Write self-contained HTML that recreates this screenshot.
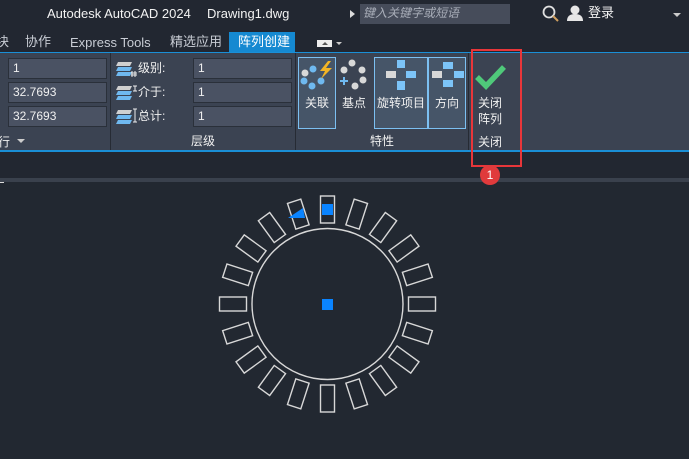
<!DOCTYPE html>
<html><head><meta charset="utf-8"><style>
*{margin:0;padding:0;box-sizing:border-box}
body{width:689px;height:459px;overflow:hidden;background:#222831;font-family:"Liberation Sans","Noto Sans CJK SC",sans-serif;color:#e8eaee;position:relative}
.a{position:absolute}
.t{font-size:13px;white-space:nowrap;line-height:16px}
.inp{position:absolute;background:#4a5263;border:1px solid #2a303a;height:21px;font-size:12px;color:#f0f0f0;padding:2px 0 0 4px}
.btn{position:absolute;top:57px;height:72px;border:1px solid #7cc0f2;background:#465568}
.lbl{position:absolute;font-size:12px;color:#f0f0f0;white-space:nowrap;line-height:16px}
</style></head><body>
<div class="a" style="left:0;top:0;width:689px;height:30px;background:#222731"></div>
<div class="a t" style="left:47px;top:6px;color:#f2f2f2">Autodesk AutoCAD 2024</div>
<div class="a t" style="left:207px;top:6px;color:#f2f2f2">Drawing1.dwg</div>
<div class="a" style="left:350px;top:10px;width:0;height:0;border-left:5px solid #ddd;border-top:4px solid transparent;border-bottom:4px solid transparent"></div>
<div class="a" style="left:360px;top:4px;width:150px;height:20px;background:#464c5a"></div>
<div class="a" style="left:363px;top:5px;font-size:12px;color:#a8adb8;font-style:italic;line-height:16px">键入关键字或短语</div>
<svg class="a" style="left:541px;top:4px" width="20" height="20"><circle cx="8" cy="8" r="5.5" fill="none" stroke="#e0e0e0" stroke-width="1.8"/><line x1="12" y1="12" x2="17" y2="17" stroke="#d0a060" stroke-width="2"/></svg>
<svg class="a" style="left:566px;top:4px" width="18" height="18"><circle cx="9" cy="6" r="4.5" fill="#e6e6e6"/><path d="M1 17 Q1 10 9 10 Q17 10 17 17Z" fill="#e6e6e6"/></svg>
<div class="a t" style="left:588px;top:5px;color:#f2f2f2">登录</div>
<div class="a" style="left:673px;top:13px;border-top:4px solid #ccc;border-left:4px solid transparent;border-right:4px solid transparent"></div>
<div class="a" style="left:0;top:30px;width:689px;height:22px;background:#222731"></div>
<div class="a t" style="left:-4px;top:34px;color:#c8ccd4">块</div>
<div class="a t" style="left:25px;top:34px;color:#c8ccd4">协作</div>
<div class="a t" style="left:70px;top:35px;color:#c8ccd4">Express Tools</div>
<div class="a t" style="left:170px;top:34px;color:#c8ccd4">精选应用</div>
<div class="a" style="left:229px;top:32px;width:66px;height:21px;background:#1589d1"></div>
<div class="a t" style="left:238px;top:34px;color:#fff">阵列创建</div>
<div class="a" style="left:317px;top:40px;width:15px;height:7px;background:#eee"></div>
<div class="a" style="left:322px;top:42px;border-bottom:3px solid #555;border-left:3px solid transparent;border-right:3px solid transparent"></div>
<div class="a" style="left:336px;top:42px;border-top:3px solid #ccc;border-left:3px solid transparent;border-right:3px solid transparent"></div>
<div class="a" style="left:0;top:52px;width:689px;height:1px;background:#1a8fd6"></div>
<div class="a" style="left:0;top:53px;width:689px;height:97px;background:#3b4352"></div>
<div class="a" style="left:0;top:150px;width:689px;height:2px;background:#1a8fd6"></div>
<div class="a" style="left:0;top:152px;width:689px;height:26px;background:#222731"></div>
<div class="a" style="left:0;top:178px;width:689px;height:4px;background:#3a414d"></div>
<div class="a" style="left:0;top:182px;width:4px;height:1px;background:#ddd"></div>
<div class="inp" style="left:8px;top:58px;width:99px">1</div>
<div class="inp" style="left:8px;top:82px;width:99px">32.7693</div>
<div class="inp" style="left:8px;top:106px;width:99px">32.7693</div>
<div class="lbl" style="left:-2px;top:134px">行</div>
<div class="a" style="left:17px;top:139px;border-top:4px solid #ccc;border-left:4px solid transparent;border-right:4px solid transparent"></div>
<div class="a" style="left:110px;top:53px;width:1px;height:97px;background:#262b34"></div>
<svg class="a" style="left:116px;top:59px" width="22" height="70">
<g fill="#d0d0d0"><path d="M2 3 L16 3 L14 7 L0 7Z"/><path d="M2 27 L16 27 L14 31 L0 31Z"/><path d="M2 51 L16 51 L14 55 L0 55Z"/></g>
<g fill="#6fb9f0"><path d="M2 8 L16 8 L14 12 L0 12Z"/><path d="M2 13 L16 13 L14 17 L0 17Z"/><path d="M2 32 L16 32 L14 36 L0 36Z"/><path d="M2 37 L16 37 L14 41 L0 41Z"/><path d="M2 56 L16 56 L14 60 L0 60Z"/><path d="M2 61 L16 61 L14 65 L0 65Z"/></g>
<g stroke="#eee" stroke-width="1" fill="none"><path d="M16 12v6M19 12v6M15 14h6M15 16h6"/><path d="M17 27h4M19 27v5M17 32h4"/><path d="M17 50h4M19 50v13M17 63h4"/></g></svg>
<div class="lbl" style="left:138px;top:60px">级别:</div>
<div class="lbl" style="left:138px;top:84px">介于:</div>
<div class="lbl" style="left:138px;top:108px">总计:</div>
<div class="inp" style="left:193px;top:58px;width:99px">1</div>
<div class="inp" style="left:193px;top:82px;width:99px">1</div>
<div class="inp" style="left:193px;top:106px;width:99px">1</div>
<div class="lbl" style="left:191px;top:133px">层级</div>
<div class="a" style="left:295px;top:53px;width:1px;height:97px;background:#262b34"></div>
<div class="btn" style="left:298px;width:38px"></div>
<div class="btn" style="left:374px;width:54px"></div>
<div class="btn" style="left:428px;width:38px"></div>
<svg class="a" style="left:300px;top:59px" width="38" height="34">
<circle cx="5" cy="14" r="3.5" fill="#d8d8d8"/><circle cx="13" cy="10" r="3.5" fill="#6fb9f0"/><circle cx="4" cy="22" r="3.5" fill="#6fb9f0"/><circle cx="12" cy="27" r="3.5" fill="#6fb9f0"/><circle cx="21" cy="22" r="3.5" fill="#6fb9f0"/>
<path d="M28 2 L20 12 L25 12 L21 20 L32 9 L26 9 L31 2Z" fill="#f3b525"/></svg>
<svg class="a" style="left:340px;top:59px" width="34" height="34">
<circle cx="12" cy="4" r="3.5" fill="#d8d8d8"/><circle cx="4" cy="11" r="3.5" fill="#d8d8d8"/><circle cx="22" cy="11" r="3.5" fill="#d8d8d8"/><circle cx="23" cy="21" r="3.5" fill="#d8d8d8"/><circle cx="15" cy="27" r="3.5" fill="#d8d8d8"/>
<path d="M4 18v8M0 22h8" stroke="#6fb9f0" stroke-width="2"/></svg>
<svg class="a" style="left:384px;top:59px" width="36" height="34">
<rect x="13" y="1" width="8" height="8" fill="#7cc4f8"/><rect x="2" y="12" width="10" height="7" fill="#d8d8d8"/><rect x="22" y="12" width="10" height="7" fill="#7cc4f8"/><rect x="13" y="22" width="8" height="9" fill="#7cc4f8"/></svg>
<svg class="a" style="left:431px;top:59px" width="36" height="34">
<rect x="12" y="3" width="10" height="7" fill="#7cc4f8"/><rect x="1" y="12" width="10" height="7" fill="#d8d8d8"/><rect x="23" y="12" width="10" height="7" fill="#7cc4f8"/><rect x="12" y="21" width="10" height="7" fill="#7cc4f8"/></svg>
<div class="lbl" style="left:305px;top:95px">关联</div>
<div class="lbl" style="left:342px;top:95px">基点</div>
<div class="lbl" style="left:377px;top:95px">旋转项目</div>
<div class="lbl" style="left:435px;top:95px">方向</div>
<div class="lbl" style="left:370px;top:133px">特性</div>
<div class="a" style="left:468px;top:53px;width:1px;height:97px;background:#262b34"></div>
<svg class="a" style="left:474px;top:63px" width="34" height="28"><path d="M3 14 L12 23 L30 4" fill="none" stroke="#4fc97a" stroke-width="5.5"/></svg>
<div class="lbl" style="left:478px;top:95px">关闭</div>
<div class="lbl" style="left:478px;top:111px">阵列</div>
<div class="lbl" style="left:478px;top:134px">关闭</div>
<div class="a" style="left:471px;top:49px;width:51px;height:118px;border:2px solid #e8363a"></div>
<div class="a" style="left:480px;top:165px;width:20px;height:20px;border-radius:50%;background:#e03a3c;color:#fff;font-size:12px;text-align:center;line-height:20px">1</div>
<svg class="a" style="left:0;top:0" width="689" height="459">
<g transform="translate(327.5,304)" fill="none" stroke="#d8d8d8" stroke-width="1.4">
<circle r="75.5"/>
<g id="r"><rect x="-7" y="-108" width="14" height="27"/></g>
<use href="#r" transform="rotate(18)"/><use href="#r" transform="rotate(36)"/><use href="#r" transform="rotate(54)"/><use href="#r" transform="rotate(72)"/><use href="#r" transform="rotate(90)"/><use href="#r" transform="rotate(108)"/><use href="#r" transform="rotate(126)"/><use href="#r" transform="rotate(144)"/><use href="#r" transform="rotate(162)"/><use href="#r" transform="rotate(180)"/><use href="#r" transform="rotate(198)"/><use href="#r" transform="rotate(216)"/><use href="#r" transform="rotate(234)"/><use href="#r" transform="rotate(252)"/><use href="#r" transform="rotate(270)"/><use href="#r" transform="rotate(288)"/><use href="#r" transform="rotate(306)"/><use href="#r" transform="rotate(324)"/><use href="#r" transform="rotate(342)"/>
</g>
<rect x="322" y="204" width="11" height="11" fill="#0a84ff"/>
<rect x="322" y="299" width="11" height="11" fill="#0a84ff"/>
<path d="M288 218 L303 208 L305 218Z" fill="#0a84ff"/>
</svg>
</body></html>
